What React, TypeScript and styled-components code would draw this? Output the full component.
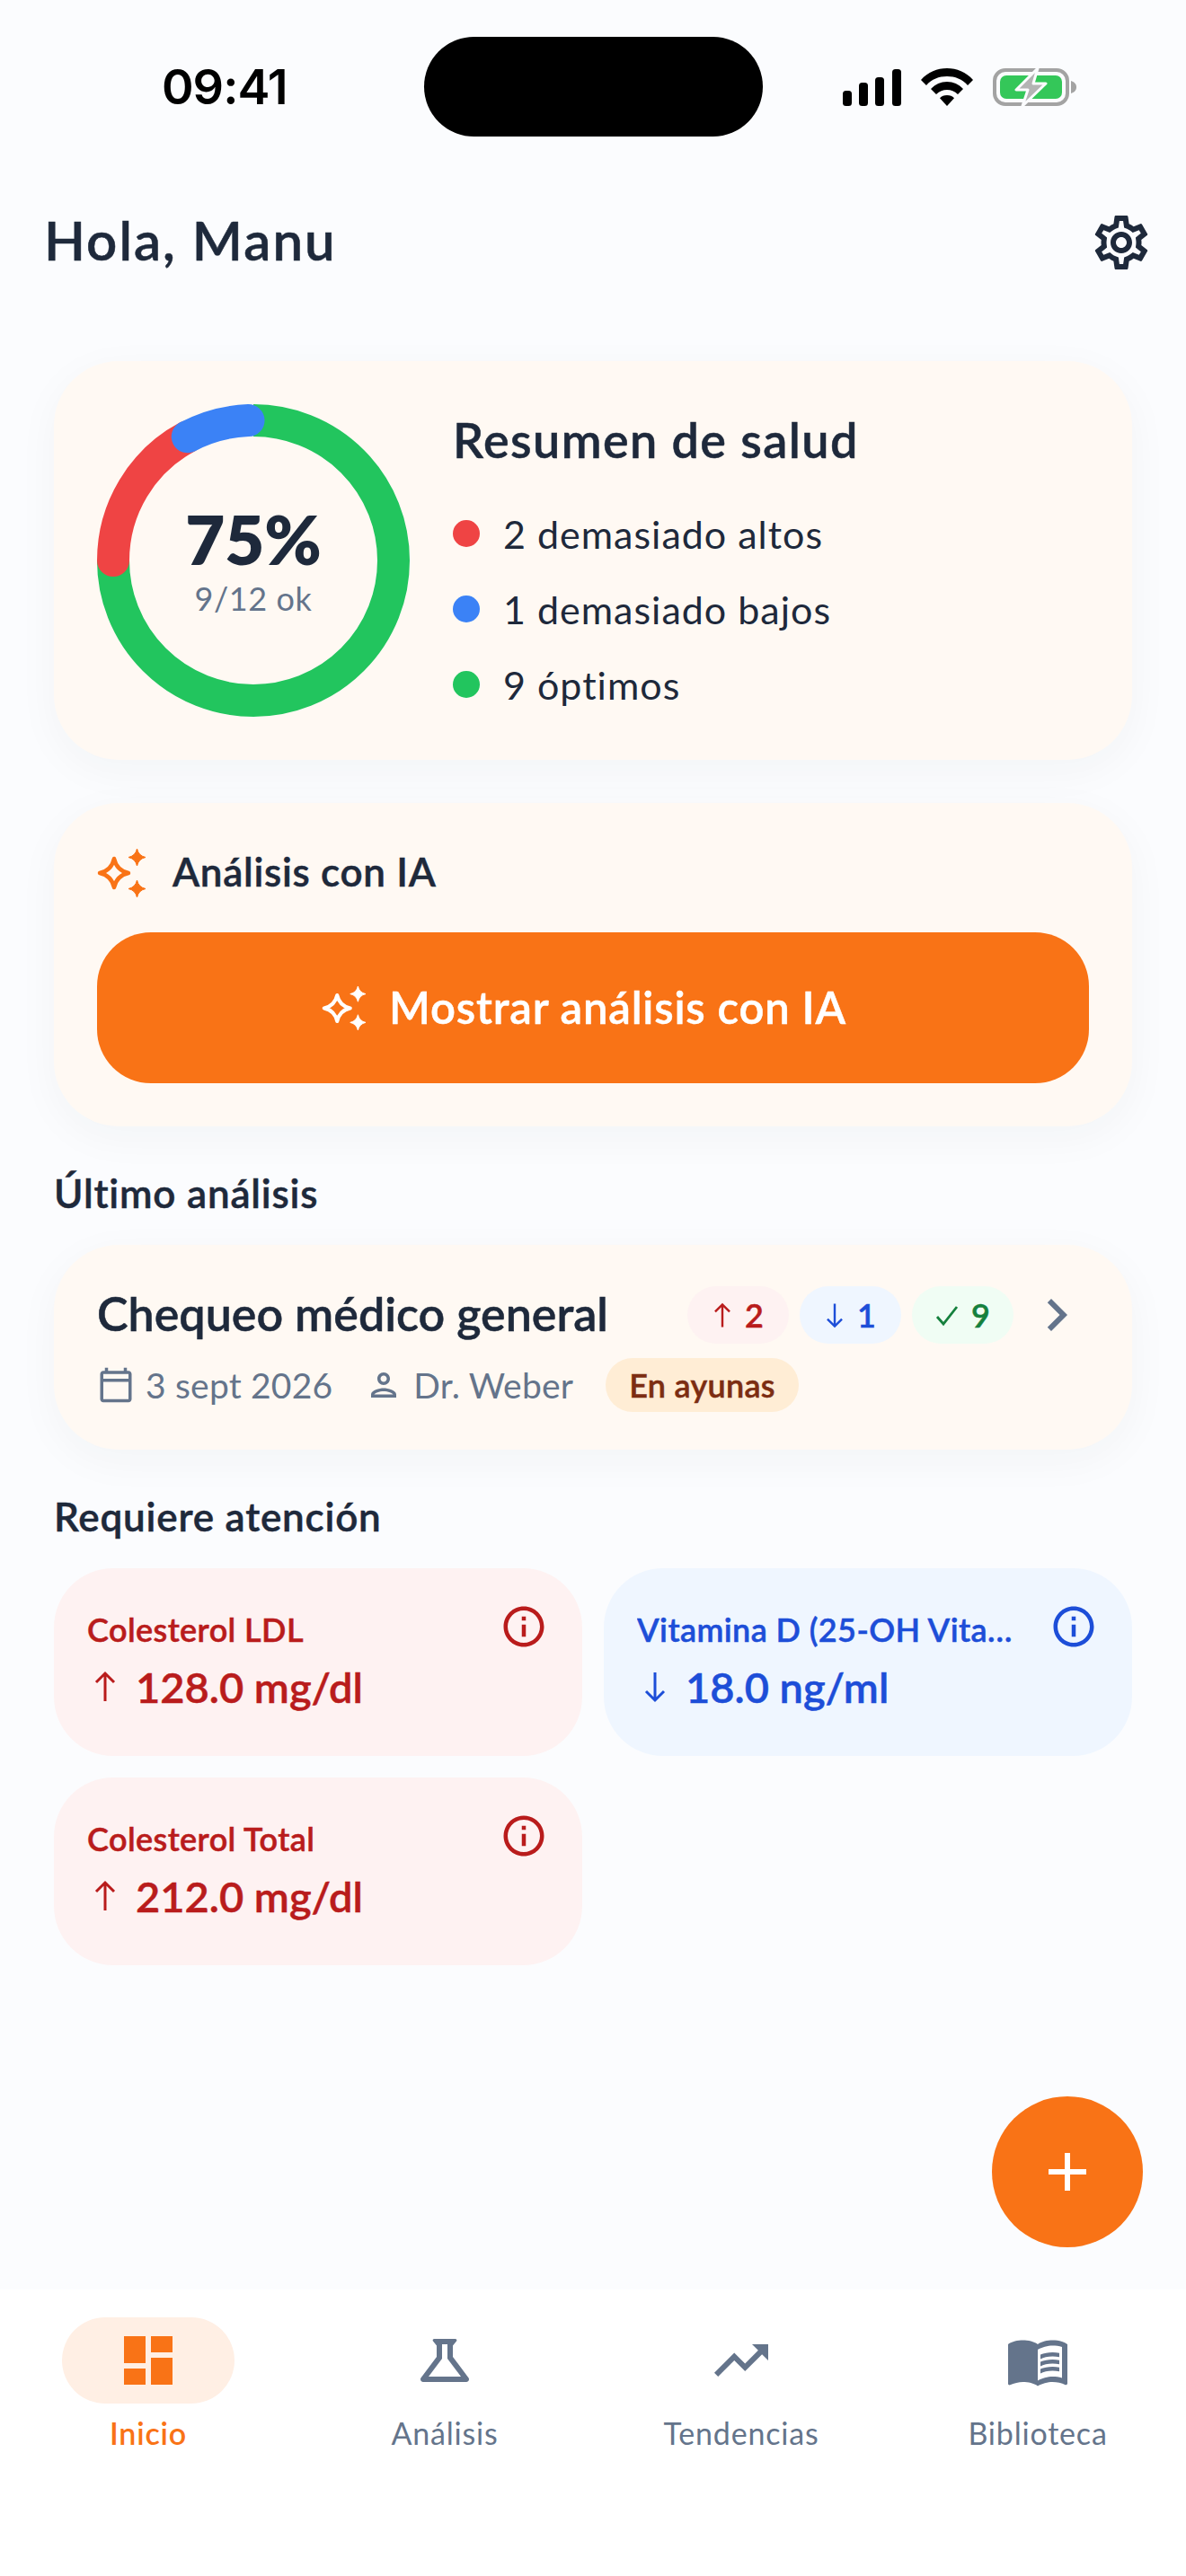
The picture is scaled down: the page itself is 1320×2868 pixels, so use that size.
import React, { FC } from 'react';
import styled, { createGlobalStyle, css } from 'styled-components';
import {
  MdOutlineSettings,
  MdChevronRight,
  MdOutlineCalendarToday,
  MdOutlinePerson,
  MdInfoOutline,
  MdAdd,
  MdDashboard,
  MdOutlineScience,
  MdTrendingUp,
  MdMenuBook,
} from 'react-icons/md';

const FONT = `"Lato", "Noto Sans", sans-serif`;

// Lato has no weight between its medium-looking 600 and a heavy 700
const semibold = css`
  font-weight: 600;
  -webkit-text-stroke: 0.5px currentColor;
`;

const GlobalStyle = createGlobalStyle`
  html, body {
    margin: 0;
    padding: 0;
    background: #fbfcfe;
  }
  * {
    box-sizing: border-box;
  }
`;

type Tone = 'red' | 'blue' | 'green';

const toneColors: Record<Tone, { bg: string; fg: string }> = {
  red: { bg: '#fef2f2', fg: '#b91c1c' },
  blue: { bg: '#eff6ff', fg: '#1d4ed8' },
  green: { bg: '#f0fdf4', fg: '#15803d' },
};

const starPath = (cx: number, cy: number, r: number) => {
  const k = r * 0.18;
  return `M${cx} ${cy - r}Q${cx + k} ${cy - k} ${cx + r} ${cy}Q${cx + k} ${cy + k} ${cx} ${cy + r}Q${cx - k} ${cy + k} ${cx - r} ${cy}Q${cx - k} ${cy - k} ${cx} ${cy - r}Z`;
};

const SparklesIcon: FC<{ size: number; color: string }> = ({ size, color }) => (
  <svg width={size} height={size} viewBox="0 0 54 54">
    <path
      d={starPath(19, 27, 16)}
      fill="none"
      stroke={color}
      strokeWidth="4.5"
      strokeLinejoin="round"
    />
    <path d={starPath(44.5, 9.5, 9.5)} fill={color} stroke={color} />
    <path d={starPath(44.5, 44.5, 9.5)} fill={color} stroke={color} />
  </svg>
);

const ArrowIcon: FC<{ dir: 'up' | 'down'; h: number; w: number; color: string }> = ({
  dir,
  h,
  w,
  color,
}) => (
  <svg width={w} height={h} viewBox="0 0 24 36">
    <path
      d={dir === 'up' ? 'M12 34V3M2 13L12 3l10 10' : 'M12 2v31M2 23l10 10 10-10'}
      fill="none"
      stroke={color}
      strokeWidth="3"
    />
  </svg>
);

const CheckIcon: FC<{ color: string }> = ({ color }) => (
  <svg width="26" height="26" viewBox="0 0 26 26">
    <path d="M2 15l7 8L24 4" fill="none" stroke={color} strokeWidth="2.8" />
  </svg>
);

const SignalIcon = () => (
  <svg width="65" height="41" viewBox="0 0 65 41">
    <rect x="0" y="24" width="10" height="17" rx="3.5" fill="#000" />
    <rect x="18" y="15" width="10" height="26" rx="3.5" fill="#000" />
    <rect x="36" y="9" width="10" height="32" rx="3.5" fill="#000" />
    <rect x="55" y="0" width="10" height="41" rx="3.5" fill="#000" />
  </svg>
);

const WifiIcon = () => (
  <svg width="58" height="42" viewBox="0 0 58 42">
    <path d="M29 0C40 0 50 4 58 13l-6 6C46 12 38 9 29 9S12 12 6 19l-6-6C8 4 18 0 29 0Z" fill="#000" />
    <path d="M29 15c7 0 13 2.800 18 8l-6 6c-3.500-3.300-7.500-5-12-5s-8.500 1.700-12 5l-6-6c5-5.200 11-8 18-8Z" fill="#000" />
    <path d="M29 30c3.500 0 6 1 8 3.300L29 42l-8-8.700c2-2.300 4.500-3.300 8-3.300Z" fill="#000" />
  </svg>
);

const BatteryIcon = () => (
  <svg width="93" height="44" viewBox="0 0 93 44">
    <rect x="2" y="3" width="81" height="38" rx="12" fill="none" stroke="#a3a3a3" strokeWidth="4" />
    <rect x="8" y="9" width="69" height="26" rx="7" fill="#34c759" />
    <path d="M87 15c3 1 6 3 6 7s-3 6-6 7Z" fill="#a3a3a3" />
    <path
      d="M50 1L26 25h13l-6 18 26-25H45Z"
      fill="#b4b4b4"
      stroke="#fbfcfe"
      strokeWidth="3"
      strokeLinejoin="round"
    />
  </svg>
);

const Donut: FC = () => {
  const r = 156;
  const c = 174;
  const point = (deg: number) => {
    const a = ((deg - 90) * Math.PI) / 180;
    return `${c + r * Math.cos(a)} ${c + r * Math.sin(a)}`;
  };
  const arc = (from: number, to: number) =>
    `M${point(from)}A${r} ${r} 0 ${to - from > 180 ? 1 : 0} 1 ${point(to)}`;
  return (
    <svg width="348" height="348" viewBox="0 0 348 348">
      <path d={arc(0, 270)} fill="none" stroke="#22c55e" strokeWidth="36" />
      <path d={arc(270, 332)} fill="none" stroke="#ef4444" strokeWidth="36" strokeLinecap="round" />
      <path d={arc(332, 358)} fill="none" stroke="#3b82f6" strokeWidth="36" strokeLinecap="round" />
    </svg>
  );
};

const App: FC = () => (
  <>
    <GlobalStyle />
    <Screen>
      <StatusBar>
        <Clock>09:41</Clock>
        <Island />
        <StatusIcons>
          <SignalIcon />
          <WifiIcon />
          <BatteryIcon />
        </StatusIcons>
      </StatusBar>

      <Main>
        <Header>
          <Greeting>Hola, Manu</Greeting>
          <MdOutlineSettings size={72} color="#1e293b" />
        </Header>

        <SummaryCard>
          <DonutWrap>
            <Donut />
            <DonutCenter>
              <Percent>75%</Percent>
              <PercentSub>9/12 ok</PercentSub>
            </DonutCenter>
          </DonutWrap>
          <SummaryBody>
            <SummaryTitle>Resumen de salud</SummaryTitle>
            <Legend>
              <LegendRow>
                <Dot $color="#ef4444" />2 demasiado altos
              </LegendRow>
              <LegendRow>
                <Dot $color="#3b82f6" />1 demasiado bajos
              </LegendRow>
              <LegendRow>
                <Dot $color="#22c55e" />9 óptimos
              </LegendRow>
            </Legend>
          </SummaryBody>
        </SummaryCard>

        <AiCard>
          <AiTitleRow>
            <SparklesIcon size={54} color="#f97316" />
            <AiTitle>Análisis con IA</AiTitle>
          </AiTitleRow>
          <AiButton>
            <SparklesIcon size={49} color="#ffffff" />
            <span>Mostrar análisis con IA</span>
          </AiButton>
        </AiCard>

        <SectionTitle>Último análisis</SectionTitle>
        <ReportCard>
          <ReportTop>
            <ReportName>Chequeo médico general</ReportName>
            <Pills>
              <CountPill $tone="red">
                <ArrowIcon dir="up" w={22} h={29} color={toneColors.red.fg} />2
              </CountPill>
              <CountPill $tone="blue">
                <ArrowIcon dir="down" w={22} h={29} color={toneColors.blue.fg} />1
              </CountPill>
              <CountPill $tone="green">
                <CheckIcon color={toneColors.green.fg} />9
              </CountPill>
            </Pills>
            <MdChevronRight size={72} color="#64748b" />
          </ReportTop>
          <ReportMeta>
            <MetaItem>
              <MdOutlineCalendarToday size={42} />3 sept 2026
            </MetaItem>
            <MetaItem>
              <MdOutlinePerson size={42} />
              Dr. Weber
            </MetaItem>
            <FastingPill>En ayunas</FastingPill>
          </ReportMeta>
        </ReportCard>

        <SectionTitle>Requiere atención</SectionTitle>
        <AttentionGrid>
          <AttentionCard $tone="red">
            <AttentionTop>
              <AttentionName>Colesterol LDL</AttentionName>
              <MdInfoOutline size={54} />
            </AttentionTop>
            <AttentionValue>
              <ArrowIcon dir="up" w={24} h={36} color={toneColors.red.fg} />
              128.0 mg/dl
            </AttentionValue>
          </AttentionCard>
          <AttentionCard $tone="blue">
            <AttentionTop>
              <AttentionName>Vitamina D (25-OH Vitamina D3)</AttentionName>
              <MdInfoOutline size={54} />
            </AttentionTop>
            <AttentionValue>
              <ArrowIcon dir="down" w={24} h={36} color={toneColors.blue.fg} />
              18.0 ng/ml
            </AttentionValue>
          </AttentionCard>
          <AttentionCard $tone="red">
            <AttentionTop>
              <AttentionName>Colesterol Total</AttentionName>
              <MdInfoOutline size={54} />
            </AttentionTop>
            <AttentionValue>
              <ArrowIcon dir="up" w={24} h={36} color={toneColors.red.fg} />
              212.0 mg/dl
            </AttentionValue>
          </AttentionCard>
        </AttentionGrid>
      </Main>

      <Fab>
        <MdAdd size={72} color="#ffffff" />
      </Fab>

      <BottomNav>
        <NavItem>
          <NavIconBox $active>
            <MdDashboard size={72} />
          </NavIconBox>
          <NavLabel $active>Inicio</NavLabel>
        </NavItem>
        <NavItem>
          <NavIconBox>
            <MdOutlineScience size={72} />
          </NavIconBox>
          <NavLabel>Análisis</NavLabel>
        </NavItem>
        <NavItem>
          <NavIconBox>
            <MdTrendingUp size={72} />
          </NavIconBox>
          <NavLabel>Tendencias</NavLabel>
        </NavItem>
        <NavItem>
          <NavIconBox>
            <MdMenuBook size={72} />
          </NavIconBox>
          <NavLabel>Biblioteca</NavLabel>
        </NavItem>
      </BottomNav>
    </Screen>
  </>
);

export default App;

const Screen = styled.div`
  position: relative;
  width: 1320px;
  height: 2868px;
  display: flex;
  flex-direction: column;
  overflow: hidden;
  background: #fbfcfe;
  font-family: ${FONT};
  font-variant-ligatures: none;
  color: #1e293b;
`;

const StatusBar = styled.div`
  height: 197px;
  flex: none;
  padding: 41px 0 0 180px;
  display: flex;
  align-items: flex-start;
`;

const Clock = styled.div`
  width: 140px;
  margin-top: 29px;
  font-family: 'Inter', sans-serif;
  font-weight: 600;
  font-size: 54px;
  line-height: 54px;
  color: #000;
  letter-spacing: -1px;
  white-space: nowrap;
`;

const Island = styled.div`
  width: 377px;
  height: 111px;
  margin-left: 152px;
  border-radius: 56px;
  background: #000;
`;

const StatusIcons = styled.div`
  display: flex;
  align-items: center;
  gap: 22px;
  margin: 34px 0 0 89px;
`;

const Main = styled.div`
  flex: 1;
  min-height: 0;
  padding: 0 60px;
  display: flex;
  flex-direction: column;
`;

const Header = styled.div`
  height: 146px;
  margin: 0 -24px 0 -11px;
  display: flex;
  justify-content: space-between;
  align-items: center;
  flex: none;
`;

const Greeting = styled.h1`
  margin: -7px 0 0;
  font-size: 60px;
  line-height: 80px;
  ${semibold}
  letter-spacing: 2px;
  color: #1e293b;
`;

const Card = styled.div`
  background: #fff9f3;
  border-radius: 72px;
  box-shadow: 0 12px 48px rgba(30, 41, 59, 0.04);
`;

const SummaryCard = styled(Card)`
  margin-top: 59px;
  height: 444px;
  padding: 48px;
  display: flex;
  align-items: center;
  gap: 48px;
`;

const DonutWrap = styled.div`
  position: relative;
  width: 348px;
  height: 348px;
  flex: none;
`;

const DonutCenter = styled.div`
  position: absolute;
  inset: 0;
  display: flex;
  flex-direction: column;
  align-items: center;
  justify-content: center;
`;

const Percent = styled.div`
  font-size: 76px;
  line-height: 84px;
  font-weight: 800;
  color: #1e293b;
`;

const PercentSub = styled.div`
  font-size: 36px;
  line-height: 48px;
  letter-spacing: 0.6px;
  color: #64748b;
`;

const SummaryBody = styled.div`
  display: flex;
  flex-direction: column;
  margin-top: -2px;
`;

const SummaryTitle = styled.div`
  font-size: 54px;
  line-height: 72px;
  ${semibold}
  letter-spacing: 1.4px;
  color: #1e293b;
`;

const Legend = styled.div`
  margin-top: 38px;
  display: flex;
  flex-direction: column;
  gap: 24px;
`;

const LegendRow = styled.div`
  height: 60px;
  display: flex;
  align-items: center;
  gap: 26px;
  font-size: 43px;
  letter-spacing: 1px;
  color: #1e293b;
`;

const Dot = styled.span<{ $color: string }>`
  width: 30px;
  height: 30px;
  border-radius: 50%;
  background: ${({ $color }) => $color};
`;

const AiCard = styled(Card)`
  margin-top: 48px;
  height: 360px;
  padding: 48px;
  display: flex;
  flex-direction: column;
`;

const AiTitleRow = styled.div`
  height: 60px;
  display: flex;
  align-items: center;
  gap: 30px;
`;

const AiTitle = styled.div`
  margin-top: -5px;
  font-size: 44px;
  ${semibold}
  letter-spacing: 0.7px;
  color: #1e293b;
`;

const AiButton = styled.div`
  margin-top: 36px;
  height: 168px;
  padding-right: 20px;
  border-radius: 60px;
  background: #f97316;
  color: #fff;
  display: flex;
  align-items: center;
  justify-content: center;
  gap: 26px;
  font-size: 49px;
  ${semibold}
  letter-spacing: 0.8px;

  span {
    margin-top: -3px;
  }
`;

const SectionTitle = styled.div`
  margin-top: 44px;
  height: 60px;
  margin-bottom: 28px;
  display: flex;
  align-items: center;
  font-size: 44px;
  ${semibold}
  letter-spacing: 0.8px;
  color: #1e293b;
`;

const ReportCard = styled(Card)`
  height: 228px;
  padding: 42px 48px 0;
  display: flex;
  flex-direction: column;
`;

const ReportTop = styled.div`
  height: 72px;
  display: flex;
  align-items: center;
`;

const ReportName = styled.div`
  flex: 1;
  margin-top: -5px;
  font-size: 52px;
  ${semibold}
  color: #1e293b;
  white-space: nowrap;
`;

const Pills = styled.div`
  display: flex;
  gap: 12px;
  margin-right: 12px;
`;

const CountPill = styled.div<{ $tone: Tone }>`
  width: 113px;
  height: 64px;
  border-radius: 32px;
  display: flex;
  align-items: center;
  justify-content: center;
  gap: 14px;
  font-size: 36px;
  ${semibold}
  background: ${({ $tone }) => toneColors[$tone].bg};
  color: ${({ $tone }) => toneColors[$tone].fg};
`;

const ReportMeta = styled.div`
  margin-top: 12px;
  height: 60px;
  display: flex;
  align-items: center;
`;

const MetaItem = styled.div`
  display: flex;
  align-items: center;
  gap: 12px;
  margin-right: 36px;
  font-size: 39px;
  letter-spacing: 0.2px;
  color: #64748b;
`;

const FastingPill = styled.div`
  height: 60px;
  padding: 0 26px;
  border-radius: 30px;
  background: #ffedd5;
  color: #7c2d12;
  display: flex;
  align-items: center;
  font-size: 36px;
  ${semibold}
  letter-spacing: 0.3px;
`;

const AttentionGrid = styled.div`
  display: grid;
  grid-template-columns: 588px 588px;
  gap: 24px;
`;

const AttentionCard = styled.div<{ $tone: Tone }>`
  height: 209px;
  padding: 38px 38px 0 37px;
  border-radius: 66px;
  background: ${({ $tone }) => toneColors[$tone].bg};
  color: ${({ $tone }) => toneColors[$tone].fg};
`;

const AttentionTop = styled.div`
  display: flex;
  align-items: flex-start;
  justify-content: space-between;
  gap: 20px;
  height: 54px;
`;

const AttentionName = styled.div`
  flex: 1;
  min-width: 0;
  margin-top: 6px;
  font-size: 36px;
  line-height: 48px;
  ${semibold}
  letter-spacing: 0.4px;
  white-space: nowrap;
  overflow: hidden;
  text-overflow: ellipsis;
`;

const AttentionValue = styled.div`
  margin-top: 8px;
  padding-left: 8px;
  display: flex;
  align-items: center;
  gap: 22px;
  font-size: 47px;
  line-height: 64px;
  ${semibold}
`;

const Fab = styled.div`
  position: absolute;
  left: 1104px;
  top: 2334px;
  width: 168px;
  height: 168px;
  border-radius: 50%;
  background: #f97316;
  display: flex;
  align-items: center;
  justify-content: center;
`;

const BottomNav = styled.div`
  flex: none;
  height: 319px;
  background: #fff;
  padding-top: 31px;
  display: grid;
  grid-template-columns: repeat(4, 1fr);
  align-items: start;
`;

const NavItem = styled.div`
  display: flex;
  flex-direction: column;
  align-items: center;
`;

const NavIconBox = styled.div<{ $active?: boolean }>`
  width: 192px;
  height: 96px;
  border-radius: 48px;
  display: flex;
  align-items: center;
  justify-content: center;
  background: ${({ $active }) => ($active ? '#ffefe4' : 'transparent')};
  color: ${({ $active }) => ($active ? '#f97316' : '#64748b')};
`;

const NavLabel = styled.div<{ $active?: boolean }>`
  margin-top: 11px;
  font-size: 34px;
  line-height: 44px;
  letter-spacing: 0.8px;
  font-weight: ${({ $active }) => ($active ? 600 : 400)};
  color: ${({ $active }) => ($active ? '#f97316' : '#64748b')};
`;
